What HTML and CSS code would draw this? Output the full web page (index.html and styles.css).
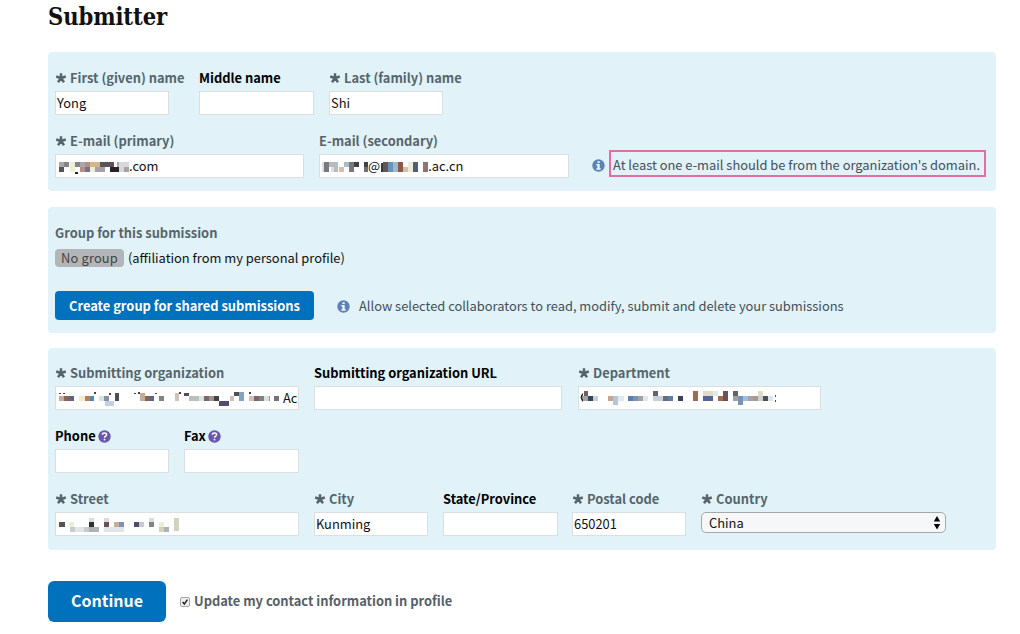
FILE: index.html
```html
<!DOCTYPE html>
<html lang="en">
<head>
<meta charset="utf-8">
<title>Submitter</title>
<link rel="stylesheet" href="styles.css">
</head>
<body>
<svg width="0" height="0" class="defs">
  <symbol id="star" viewBox="0 0 12 12"><path d="M6 6V1.2M6 6L1.2 4.5M6 6L10.8 4.5M6 6L3 10.3M6 6L9 10.3" stroke="currentColor" stroke-width="2.5" fill="none"/></symbol>
  <symbol id="info" viewBox="0 0 13 13"><circle cx="6.5" cy="6.5" r="6.2" fill="#5c83b5"/><path d="M5.5 2.2h2.2v1.9H5.5zM4.4 5h3.3v4.3h1v1.4H4.4V9.300h1V6.400h-1z" fill="#eef6fb"/></symbol>
  <symbol id="help" viewBox="0 0 13 13"><circle cx="6.500" cy="6.500" r="6.200" fill="#6a56ad"/><path d="M4.400 4.700C4.500 2.400 8.700 2.400 8.600 4.700C8.500 6.100 6.600 6 6.500 7.800" fill="none" stroke="#fff" stroke-width="1.500"/><path d="M5.700 8.800h1.600v1.600H5.700z" fill="#fff"/></symbol>
</svg>
<main class="page">
  <h1 class="title">Submitter</h1>

  <section class="panel">
    <div class="row">
      <div class="field w-name"><label class="label req"><svg class="star"><use href="#star"/></svg><span>First (given) name</span></label><div class="input w-s">Yong</div></div>
      <div class="field"><label class="label">Middle name</label><div class="input w-m"></div></div>
      <div class="field"><label class="label req"><svg class="star"><use href="#star"/></svg><span>Last (family) name</span></label><div class="input w-s">Shi</div></div>
    </div>
    <div class="row">
      <div class="field"><label class="label req"><svg class="star"><use href="#star"/></svg><span>E-mail (primary)</span></label>
        <div class="input w-mail"><svg class="mosaic m-primary" viewBox="57 155 72 22">
          <path fill="#a9a7aa" d="M59 162h5v5h-5zM80 162h5v5h-5zM117 162h4v5h-4z"/><path fill="#55555a" d="M59 167h5v5h-5zM100 162h9v5h-9z"/><path fill="#858489" d="M64 162h5v5h-5zM75 162h5v5h-5z"/><path fill="#efefd8" d="M70 162h5v10h-5zM90 167h5v5h-5z"/><path fill="#6c7692" d="M85 167h5v5h-5z"/><path fill="#b98e86" d="M80 167h5v5h-5zM85 162h5v5h-5z"/><path fill="#d5b58e" d="M90 162h10v5h-10z"/><path fill="#a6a1a9" d="M95 167h10v5h-10zM124 167h5v5h-5z"/><path fill="#262227" d="M110 167h9v5h-9zM75 172h3v2h-3z"/><path fill="#624f5a" d="M109 162h5v5h-5z"/><path fill="#d6d9db" d="M119 162h10v5h-10zM119 167h5v5h-5z"/>
        </svg><span>.com</span></div></div>
      <div class="field"><label class="label req"><span>E-mail (secondary)</span></label>
        <div class="input w-mail2"><svg class="mosaic m-secondary" viewBox="321 155 47 22">
          <path fill="#dedede" d="M322 162h4v10h-4zM331 167h5v5h-5z"/><path fill="#777980" d="M324 162h5v10h-5zM349 162h5v10h-5z"/><path fill="#b7bdbc" d="M329 162h9v5h-9zM334 167h4v5h-4z"/><path fill="#d7c0a8" d="M339 167h5v5h-5z"/><path fill="#a8bec3" d="M344 162h5v5h-5z"/><path fill="#3e4148" d="M354 162h5v5h-5zM364 162h5v5h-5z"/><path fill="#706d72" d="M364 167h5v5h-5z"/>
        </svg><span>@</span><svg class="mosaic m-domain" viewBox="381 155 48 22">
          <path fill="#333b40" d="M382 163h2v9h-2z"/><path fill="#605856" d="M384 162h5v10h-5z"/><path fill="#6794b6" d="M389 162h5v10h-5z"/><path fill="#9eb8d1" d="M394 162h5v10h-5z"/><path fill="#8d5947" d="M399 162h5v10h-5z"/><path fill="#d8bda8" d="M404 167h5v5h-5z"/><path fill="#e9ecd9" d="M409 162h5v10h-5z"/><path fill="#515c76" d="M414 162h5v10h-5z"/><path fill="#8c7478" d="M424 162h5v10h-5z"/>
        </svg><span>.ac.cn</span></div></div>
      <div class="mailhint"><svg class="ico"><use href="#info"/></svg><div class="callout"><span>At least one e-mail should be from the organization's domain.</span></div></div>
    </div>
  </section>

  <section class="panel group">
    <div class="label req"><span>Group for this submission</span></div>
    <div class="affil"><span class="pill">No group</span><span>(affiliation from my personal profile)</span></div>
    <div class="share"><button class="btn">Create group for shared submissions</button><svg class="ico"><use href="#info"/></svg><span class="hint">Allow selected collaborators to read, modify, submit and delete your submissions</span></div>
  </section>

  <section class="panel org">
    <div class="row">
      <div class="field"><label class="label req"><svg class="star"><use href="#star"/></svg><span>Submitting organization</span></label>
        <div class="input w-l"><svg class="mosaic m-org" viewBox="57 388 226 22">
          <path fill="#c6aa99" d="M59 397h5v5h-5zM140 394h5v8h-5z"/><path fill="#886455" d="M64 397h5v5h-5zM145 397h5v5h-5z"/><path fill="#596887" d="M69 397h5v5h-5zM150 397h4v5h-4z"/><path fill="#f5ead0" d="M79 397h6v5h-6z"/><path fill="#c17b4c" d="M85 397h5v5h-5z"/><path fill="#4d8bb9" d="M90 397h4v5h-4z"/><path fill="#dbe2d9" d="M99 397h5v5h-5zM264 397h5v5h-5z"/><path fill="#8491a8" d="M104 397h5v5h-5z"/><path fill="#c3d0df" d="M105 402h9v5h-9z"/><path fill="#4c5157" d="M115 394h4v8h-4zM184 394h5v3h-5zM234 393h5v4h-5z"/><path fill="#7f8580" d="M159 397h5v5h-5zM259 397h5v5h-5z"/><path fill="#cec1b7" d="M175 394h4v8h-4zM230 397h4v5h-4zM249 397h5v5h-5z"/><path fill="#bac1b9" d="M189 397h10v5h-10z"/><path fill="#d8e5e1" d="M199 397h5v5h-5z"/><path fill="#7e6471" d="M204 397h5v5h-5zM254 397h5v5h-5z"/><path fill="#a19683" d="M209 397h5v5h-5zM269 397h1v5h-1z"/><path fill="#40404a" d="M214 397h5v5h-5z"/><path fill="#544b72" d="M219 402h10v5h-10z"/><path fill="#83a4c2" d="M239 393h5v9h-5z"/><path fill="#74717a" d="M274 397h5v5h-5z"/><path fill="#444" d="M59 394h2v1h-2zM63 394h2v1h-2zM94 393h2v2h-2zM109 394h2v2h-2zM134 394h2v1h-2zM138 393h2v2h-2zM155 394h2v1h-2zM179 393h2v2h-2zM249 393h2v2h-2z"/>
        </svg><span>Ac</span></div></div>
      <div class="field"><label class="label"><span>Submitting organization URL</span></label><div class="input w-url"></div></div>
      <div class="field dep"><label class="label req"><svg class="star"><use href="#star"/></svg><span>Department</span></label>
        <div class="input w-dep"><svg class="mosaic m-dep" viewBox="580 388 200 22">
          <path fill="#292a2d" d="M583 394q-5 4 0 9v-2q-1-3 0-5z"/><path fill="#646468" d="M584 392h4v5h-4zM653 392h5v5h-5zM733 392h5v5h-5z"/><path fill="#a3a2a7" d="M583 397h5v5h-5zM638 397h5v5h-5zM733 397h5v5h-5zM748 397h5v5h-5z"/><path fill="#37435b" d="M588 397h5v5h-5zM678 397h5v5h-5z"/><path fill="#c8d1db" d="M593 397h5v5h-5zM653 397h10v5h-10zM758 397h5v5h-5z"/><path fill="#c4a597" d="M608 397h5v5h-5z"/><path fill="#b4c6d8" d="M613 397h5v9h-5z"/><path fill="#deebee" d="M618 397h6v5h-6zM643 397h5v5h-5zM713 392h5v5h-5z"/><path fill="#5c7eaa" d="M628 397h5v5h-5zM668 397h5v5h-5z"/><path fill="#7894b2" d="M633 397h5v5h-5zM738 397h5v9h-5z"/><path fill="#656d7b" d="M663 397h5v5h-5z"/><path fill="#9d6b55" d="M693 392h5v10h-5zM718 397h5v5h-5z"/><path fill="#deddc7" d="M703 392h10v5h-10zM758 392h5v5h-5z"/><path fill="#56658b" d="M703 397h10v5h-10z"/><path fill="#6c5057" d="M723 392h5v10h-5z"/><path fill="#9bbfdd" d="M743 397h5v5h-5z"/><path fill="#ae9785" d="M753 397h5v5h-5z"/><path fill="#4e5056" d="M763 397h5v5h-5zM775 396h1v2h-1zM775 401h1v2h-1z"/><path fill="#dce6ed" d="M768 397h5v5h-5z"/>
        </svg></div></div>
    </div>
    <div class="row">
      <div class="field"><label class="label">Phone<svg class="help"><use href="#help"/></svg></label><div class="input w-s"></div></div>
      <div class="field"><label class="label">Fax<svg class="help"><use href="#help"/></svg></label><div class="input w-m"></div></div>
    </div>
    <div class="row">
      <div class="field"><label class="label req"><svg class="star"><use href="#star"/></svg><span>Street</span></label>
        <div class="input w-l"><svg class="mosaic m-street" viewBox="57 513 124 22">
          <path fill="#55554e" d="M59 522h6v5h-6z"/><path fill="#eceed8" d="M69 522h5v5h-5zM159 522h5v5h-5z"/><path fill="#c5cbd0" d="M70 527h5v5h-5zM84 527h5v5h-5zM139 522h5v5h-5z"/><path fill="#e0e5eb" d="M75 527h9v5h-9zM104 527h20v5h-20z"/><path fill="#2e2e32" d="M89 522h5v5h-5z"/><path fill="#aeb3b2" d="M89 527h10v5h-10zM164 527h5v5h-5z"/><path fill="#dfdadd" d="M89 518h5v4h-5zM104 518h5v4h-5zM149 518h5v4h-5z"/><path fill="#6b5054" d="M104 522h5v5h-5z"/><path fill="#c8ad97" d="M114 522h5v5h-5z"/><path fill="#7f91ba" d="M119 522h5v5h-5z"/><path fill="#4e4d6f" d="M134 522h5v5h-5z"/><path fill="#7d8580" d="M149 522h5v5h-5z"/><path fill="#d1d2bf" d="M159 527h5v5h-5zM174 518h5v13h-5z"/>
        </svg></div></div>
      <div class="field"><label class="label req"><svg class="star"><use href="#star"/></svg><span>City</span></label><div class="input w-s">Kunming</div></div>
      <div class="field"><label class="label"><span>State/Province</span></label><div class="input w-m"></div></div>
      <div class="field zip"><label class="label req"><svg class="star"><use href="#star"/></svg><span>Postal code</span></label><div class="input w-s">650201</div></div>
      <div class="field"><label class="label req"><svg class="star"><use href="#star"/></svg><span>Country</span></label>
        <div class="select"><span>China</span><svg class="arrows" viewBox="0 0 8 14"><path d="M4 0L7.200 5.500H.8zM4 13.500L.8 8h6.400z"/></svg></div></div>
    </div>
  </section>

  <div class="actions"><button class="continue">Continue</button><span class="check"><svg viewBox="0 0 10 10"><path d="M2 5L4.200 7.600L8 2" fill="none" stroke="#222" stroke-width="1.900"/></svg></span><span class="update">Update my contact information in profile</span></div>
</main>
</body>
</html>
```
FILE: styles.css
```css
* { box-sizing: border-box; }
body { margin: 0; background: #fff; color: #111; font: 12.88px/20px "Noto Sans CJK SC", "Noto Sans", sans-serif; overflow: hidden; }
.defs { position: absolute; }
svg { display: block; flex: none; }
.page { width: 948px; margin-left: 48px; }
.title { margin: 0; height: 52px; padding-top: 1px; font: bold 23.5px/32px "DejaVu Serif Condensed", "DejaVu Serif", serif; font-stretch: condensed; letter-spacing: -0.1px; color: #111; white-space: nowrap; }
.panel { height: 139px; padding: 13px 7px 0; background: #e1f2f9; border-radius: 4px; display: flex; flex-direction: column; gap: 13px; }
.row { display: flex; gap: 15px; height: 50px; }
.field { flex: none; }
.label { display: flex; align-items: center; height: 26px; font-weight: bold; color: #000; white-space: nowrap; }
.req { color: #56656c; }
.star { width: 12px; height: 12px; margin-right: 3px; }
.help { width: 13px; height: 13px; margin-left: 2px; }
.input { display: flex; align-items: center; height: 24px; padding: 0 1px; background: #fff; border: 1px solid #d9dfe3; white-space: nowrap; overflow: hidden; color: #111; }
.w-name { width: 129px; }
.w-s { width: 114px; }
.w-m { width: 115px; }
.w-mail { width: 249px; }
.w-mail2 { width: 250px; }
.w-l { width: 244px; }
.w-url { width: 248px; }
.w-dep { width: 243px; }
.mosaic { height: 22px; }
.m-primary { width: 72px; }
.m-secondary { width: 47px; }
.m-domain { width: 48px; }
.m-org { width: 226px; }
.m-dep { width: 200px; }
.m-street { width: 124px; }
.mailhint { display: flex; align-items: center; gap: 4px; height: 27px; margin: 22px 0 0 8px; }
.ico { width: 13px; height: 13px; }
.mailhint .ico { margin-top: 4px; }
.callout { width: 377px; height: 27px; flex: none; display: flex; align-items: center; padding: 2px 0 0 2px; border: 2px solid #e36f9e; color: #435058; white-space: nowrap; }
.group { margin-top: 16px; height: 126px; gap: 0; }
.affil { display: flex; align-items: center; gap: 4px; height: 24px; white-space: nowrap; }
.pill { width: 69px; height: 18px; line-height: 18px; text-align: center; border-radius: 4px; background: #b3b6b8; color: #444; letter-spacing: .15px; }
.share { display: flex; align-items: center; height: 30px; margin-top: 20px; }
.btn { width: 259px; height: 29px; padding: 2px 0 0; border: 0; border-radius: 4px; background: #0071bc; color: #fff; font: bold 12.88px/20px "Noto Sans CJK SC", sans-serif; }
.share .ico { margin: 3px 9px 0 23px; }
.hint { color: #435058; white-space: nowrap; padding-top: 1px; }
.org { margin-top: 15px; padding-top: 12px; height: 202px; }
.dep { margin-left: 1px; }
.zip { margin-left: -1px; }
.select { width: 245px; height: 21px; padding: 0 4px 0 7px; display: flex; align-items: center; justify-content: space-between; border: 1px solid #a4a8ab; border-radius: 5px; background: #f7f7f8; }
.arrows { width: 8px; height: 14px; }
.actions { display: flex; align-items: center; height: 41px; margin-top: 31px; }
.continue { width: 118px; height: 41px; padding: 0 0 3px; border: 0; border-radius: 6px; background: #0071bc; color: #fff; font: bold 16px/24px "Noto Sans CJK SC", sans-serif; }
.check { width: 10px; height: 10px; margin: 0 4px 0 14px; border: 1px solid #a8a8a8; border-radius: 2px; background: #eee; }
.update { font-weight: bold; color: #56606a; white-space: nowrap; padding-bottom: 2px; }
```
